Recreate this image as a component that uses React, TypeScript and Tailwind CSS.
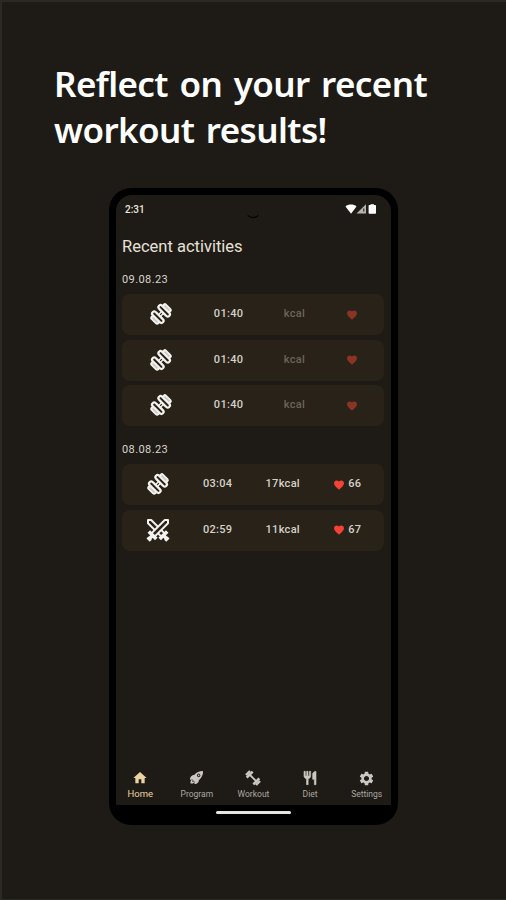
import React from 'react';
import { IoRocket } from 'react-icons/io5';
import { MdHome, MdSettings } from 'react-icons/md';

type Activity = {
  icon: 'dumbbell' | 'swords';
  time: string;
  kcal?: number;
  pulse?: number;
};

type Day = {
  date: string;
  activities: Activity[];
};

const days: Day[] = [
  {
    date: '09.08.23',
    activities: [
      { icon: 'dumbbell', time: '01:40' },
      { icon: 'dumbbell', time: '01:40' },
      { icon: 'dumbbell', time: '01:40' },
    ],
  },
  {
    date: '08.08.23',
    activities: [
      { icon: 'dumbbell', time: '03:04', kcal: 17, pulse: 66 },
      { icon: 'swords', time: '02:59', kcal: 11, pulse: 67 },
    ],
  },
];

function DumbbellIcon() {
  return (
    <svg viewBox="0 0 24 24" className="mb-px -ml-px size-6 shrink-0" fill="none" stroke="#f4f2ee" strokeWidth="2.2" strokeLinejoin="round">
      <g transform="rotate(-45 12 12)">
        <path d="M3 7.5h18v9H3z" fill="#c9c6c0" stroke="none" />
        <path d="M10.5 5h3v14h-3z" fill="#282219" stroke="none" />
        <path d="M10 12h4" strokeWidth="4" />
        <path d="M10.5 12h3" stroke="#282219" strokeWidth="1.2" />
        <rect x="5.4" y="4.8" width="4.2" height="14.4" rx="2" fill="#282219" />
        <rect x="14.4" y="4.8" width="4.2" height="14.4" rx="2" fill="#282219" />
        <path d="M5 7.5H3.3A1.3 1.3 0 0 0 2 8.8v6.4a1.3 1.3 0 0 0 1.3 1.3H5" />
        <path d="M19 7.5h1.7A1.3 1.3 0 0 1 22 8.8v6.4a1.3 1.3 0 0 1-1.3 1.3H19" />
      </g>
    </svg>
  );
}

function SwordsIcon() {
  return (
    <svg viewBox="0 0 24 24" className="mb-px -ml-px size-6 shrink-0" fill="none" stroke="#f4f2ee" strokeWidth="2" strokeLinejoin="round">
      <path d="M2 2h3.2L18.6 15.400 15.400 18.600 2 5.200z" />
      <path d="M22 2h-3.2L5.400 15.400 8.600 18.600 22 5.200z" fill="#282219" />
      <path d="m2.800 13.500 7.500 7.500M21.200 13.500 13.700 21M6.500 17.500l-4 4M17.500 17.500l4 4" strokeWidth="3.600" />
      <path d="m1.500 19.500 3.300 3.300M22.500 19.500l-3.300 3.300" strokeWidth="3" />
    </svg>
  );
}

function BarbellIcon() {
  return (
    <svg viewBox="0 0 24 24" className="size-4" fill="none" stroke="currentColor">
      <path d="m6 6 12 12" strokeWidth="2.8" />
      <path d="m2.5 11.5 9-9M12.5 21.5l9-9" strokeWidth="3.8" />
      <path d="m1.5 7.5 6-6M16.5 22.5l6-6" strokeWidth="3.6" />
    </svg>
  );
}

function CutleryIcon() {
  return (
    <svg viewBox="0 0 24 24" className="size-4" fill="currentColor" stroke="currentColor" strokeWidth="0.9">
      <path d="M11 9H9V2H7v7H5V2H3v7c0 2.12 1.66 3.84 3.75 3.97V22h2.5v-9.03C11.34 12.84 13 11.12 13 9V2h-2v7zm5-3v8h2.5v8H21V2c-2.76 0-5 2.24-5 4z" />
    </svg>
  );
}

function Heart({ dim }: { dim: boolean }) {
  return (
    <svg viewBox="0 0 24 24" className={`h-3 w-3 ${dim ? 'text-[#8a3424]' : 'text-[#f44336]'}`} fill="currentColor">
      <path d="m12 21.35-1.45-1.32C5.4 15.36 2 12.28 2 8.5 2 5.42 4.42 3 7.5 3c1.74 0 3.41.81 4.5 2.09C13.09 3.81 14.76 3 16.5 3 19.58 3 22 5.42 22 8.5c0 3.78-3.4 6.86-8.55 11.54z" />
    </svg>
  );
}

function StatusIcons() {
  return (
    <svg viewBox="0 0 33 12" className="h-3 w-[33px]" fill="#fff">
      <path d="M.5 3.4C3 1 9 1 11.5 3.4L6 10.8z" />
      <path d="M21 1.2v9.300h-9.500z" fill="#b5b3af" />
      <path d="M18.3 5.5h1v3h-1z" fill="#1e1b16" />
      <path d="M25.5 1.2h3.5v.8h1.3c.4 0 .7.3.7.7v7.4c0 .4-.3.7-.7.7h-6c-.4 0-.7-.3-.7-.7V2.700c0-.4.3-.7.7-.7h1.200z" />
    </svg>
  );
}

function ActivityRow({ activity }: { activity: Activity }) {
  const empty = activity.kcal === undefined;

  return (
    <div className="flex h-[41px] items-center justify-around rounded-lg bg-[#282219] pr-1.5 pl-2 text-[11px] font-medium tracking-[0.3px] text-[#d6d1c8]">
      {activity.icon === 'dumbbell' ? <DumbbellIcon /> : <SwordsIcon />}
      <span>{activity.time}</span>
      <span className={empty ? 'text-[#6b655b]' : ''}>{activity.kcal}kcal</span>
      <span className="flex items-center gap-[3px]">
        <Heart dim={empty} />
        {activity.pulse}
      </span>
    </div>
  );
}

const tabs = [
  { label: 'Home', icon: <MdHome size={16} /> },
  { label: 'Program', icon: <IoRocket size={15} className="mb-px" /> },
  { label: 'Workout', icon: <BarbellIcon /> },
  { label: 'Diet', icon: <CutleryIcon /> },
  { label: 'Settings', icon: <MdSettings size={17} className="-mb-px" /> },
];

export default function App() {
  return (
    <div className="h-[900px] w-[506px] overflow-hidden border-t-2 border-b border-l-2 border-[#2b2924] bg-[#1e1b16] pt-[59px] font-[Roboto,sans-serif]">
      <h1 className="ml-[52px] h-[127px] whitespace-nowrap font-['Noto_Sans',sans-serif] text-[35px] leading-[45.5px] font-semibold tracking-[-0.6px] [word-spacing:3px] text-white">
        Reflect on your recent
        <br />
        workout results!
      </h1>

      <div className="ml-[107px] flex h-[637px] w-[289px] flex-col rounded-[22px] bg-black px-[7px] pt-[7px]">
        <div className="flex h-[610px] flex-col rounded-t-[16px] bg-[#1e1b16]">
          <header className="flex h-7 items-center justify-between pr-[13px] pl-[9px]">
            <span className="w-[33px] text-[10px] font-medium text-[#e8e5df]">2:31</span>
            <span className="mt-px ml-0.5 size-4 rounded-full border border-transparent border-b-black" />
            <StatusIcons />
          </header>

          <main className="flex-1 pr-[7px] pl-[6px]">
            <h2 className="mt-2 text-[16.5px] leading-8 text-[#e6e1d9]">Recent activities</h2>
            {days.map((day, i) => (
              <section key={day.date} className={i === 0 ? 'pt-[3px]' : 'pt-[10px]'}>
                <h3 className="pt-[6px] pb-[6px] text-[11px] leading-4 tracking-[0.4px] text-[#d9d4cb]">{day.date}</h3>
                <div className="flex flex-col gap-[4.5px]">
                  {day.activities.map((activity, j) => (
                    <ActivityRow key={j} activity={activity} />
                  ))}
                </div>
              </section>
            ))}
          </main>

          <nav className="-mr-1 -ml-1 flex h-10 text-[#cbc7c0]">
            {tabs.map((tab, i) => (
              <div key={tab.label} className={`flex flex-1 flex-col items-center pt-[5px] ${i === 0 ? 'text-[#ead3a2]' : ''}`}>
                {tab.icon}
                <span className={i === 0 ? 'text-[9.5px] leading-4' : 'text-[8.5px] leading-4 text-[#aba7a0]'}>{tab.label}</span>
              </div>
            ))}
          </nav>
        </div>
        <div className="mt-[6px] ml-[100px] h-[3px] w-[75px] rounded-full bg-[#e8e6e3]" />
      </div>
    </div>
  );
}
